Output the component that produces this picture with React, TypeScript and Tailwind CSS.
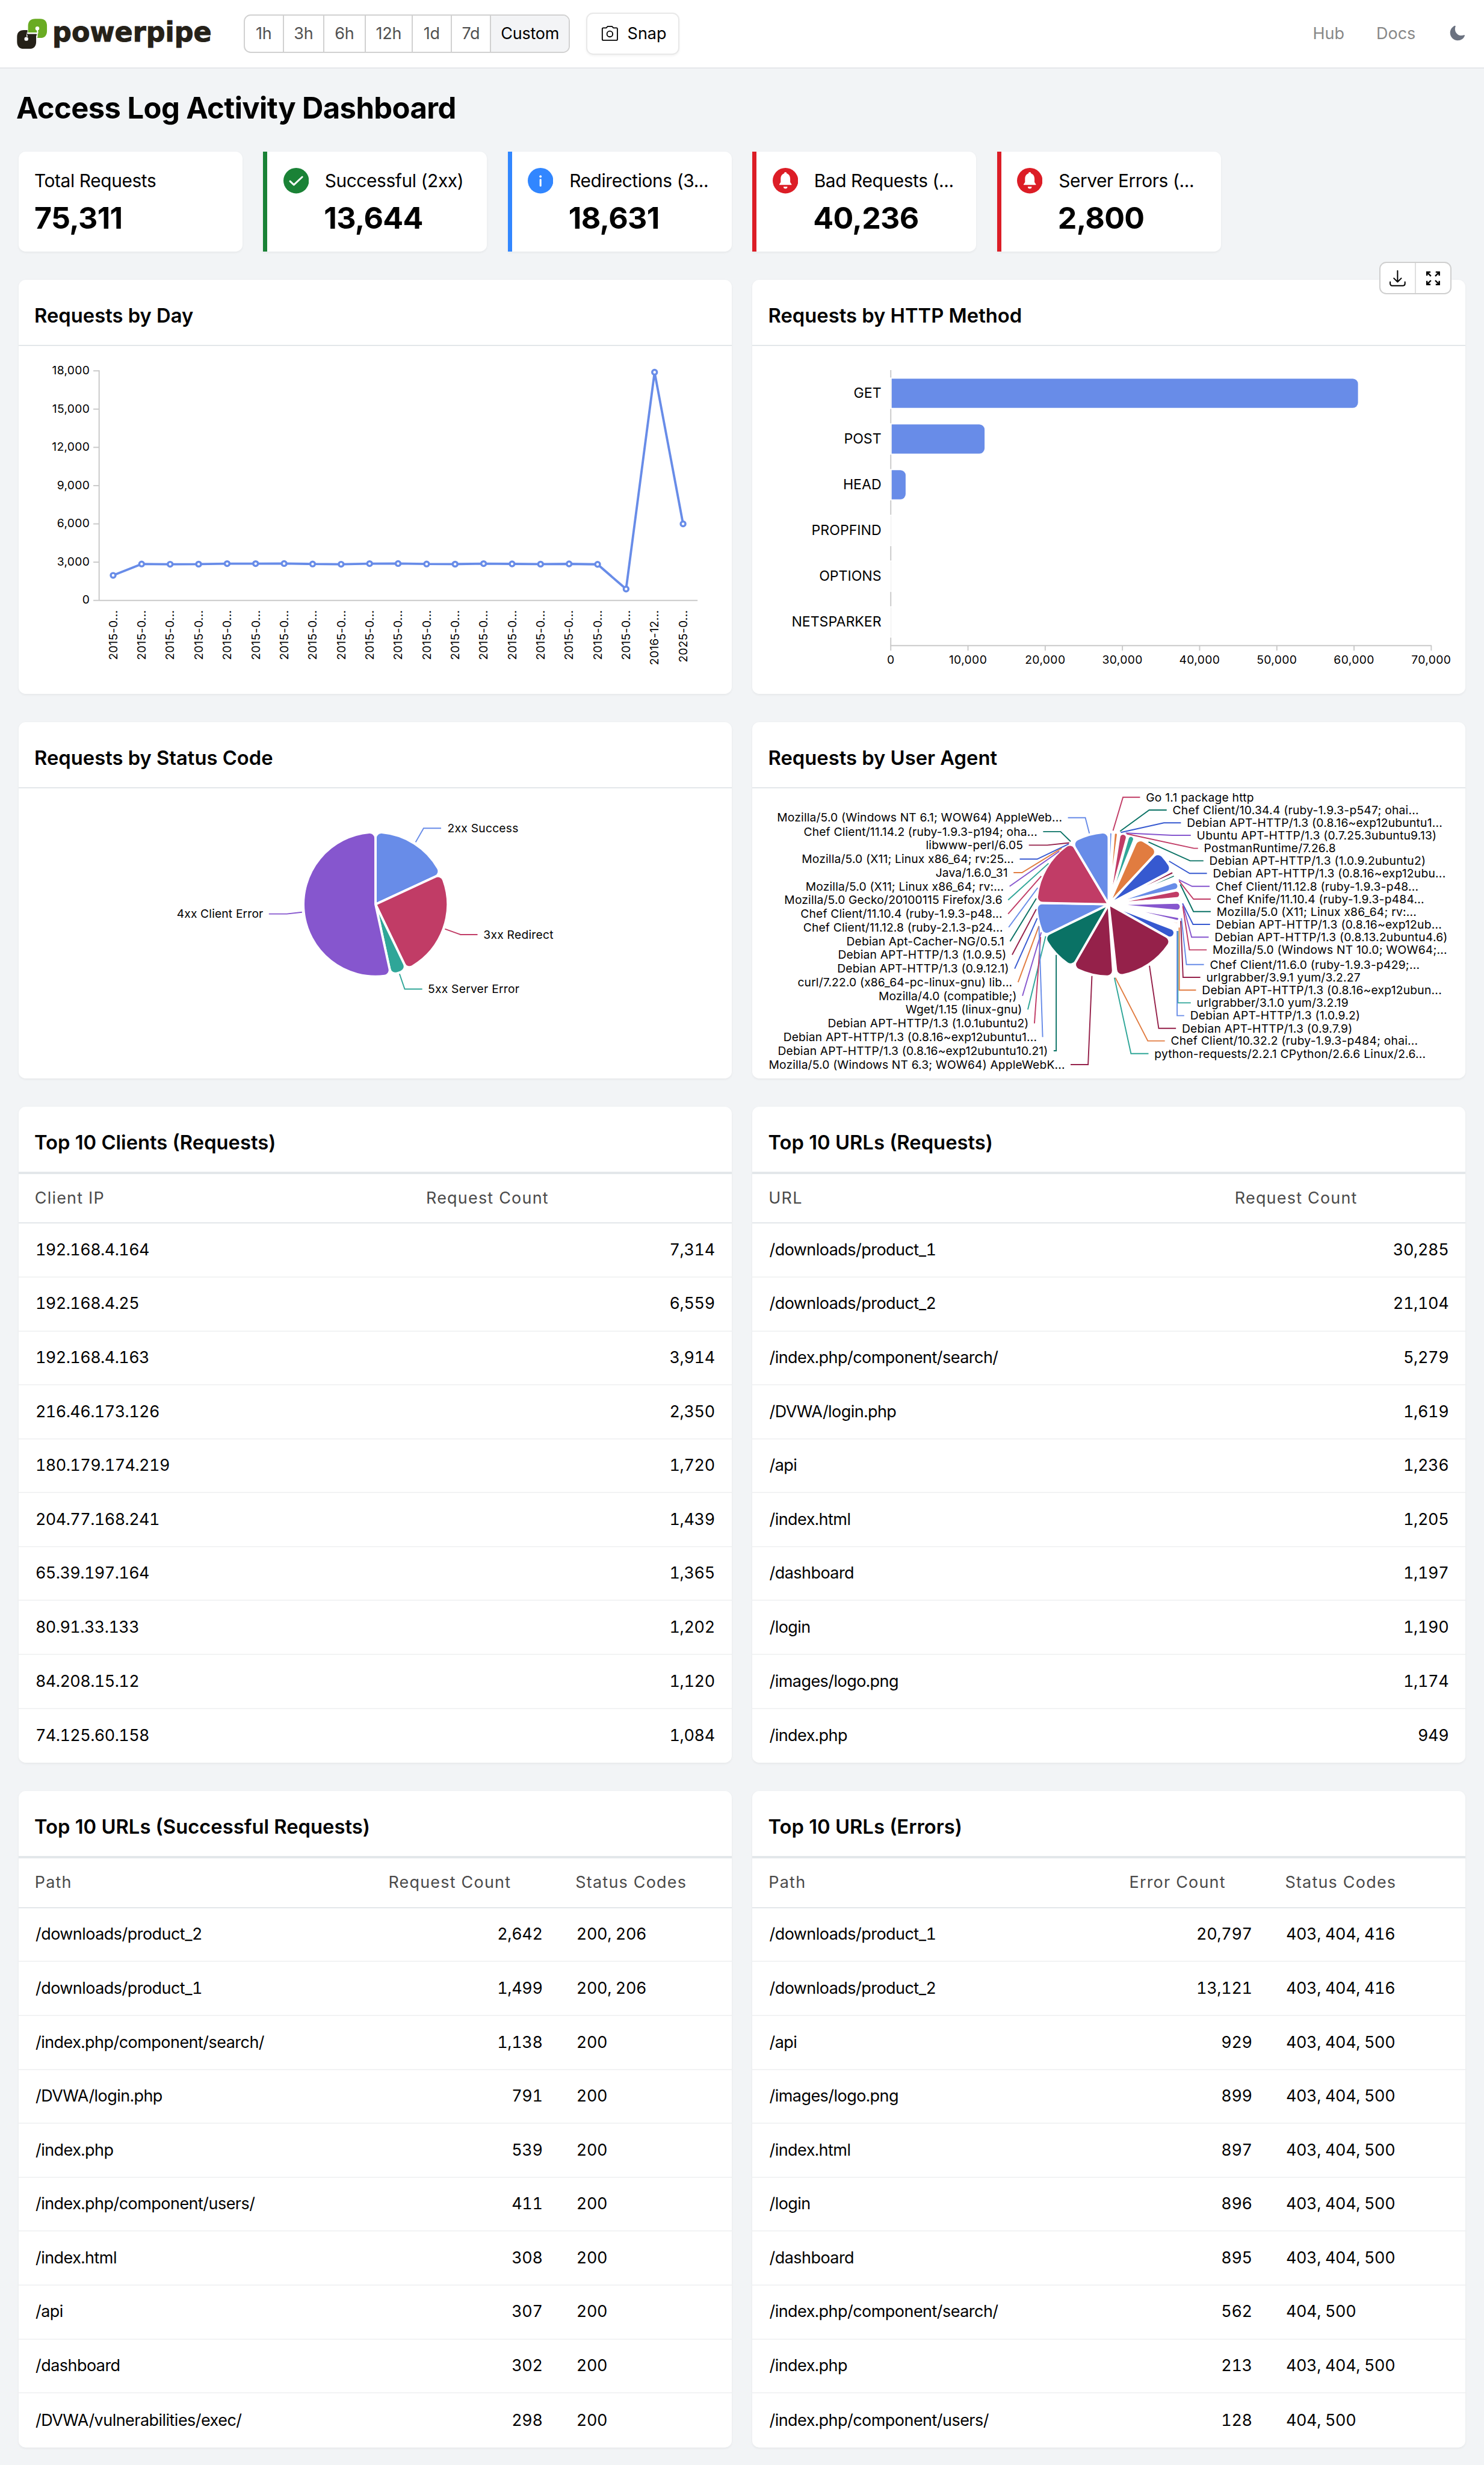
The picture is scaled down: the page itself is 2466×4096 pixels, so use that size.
import React from "react";

const C = {
  sky: "#688ce8",
  rose: "#c13c66",
  teal: "#2fa698",
  violet: "#8656ce",
  blue: "#3659d0",
  orange: "#e17c40",
  maroon: "#95214a",
  pine: "#0a7265",
};

/* ---------- geometry helpers ---------- */

function sector(cx: number, cy: number, R: number, a0: number, a1: number, corner = 5) {
  const rad = (d: number) => (d * Math.PI) / 180;
  const at = (r: number, a: number) =>
    (cx + r * Math.sin(a)).toFixed(2) + " " + (cy - r * Math.cos(a)).toFixed(2);
  const s = rad(a0);
  const e = rad(a1);
  const sn = Math.sin(Math.min((e - s) / 2, Math.PI / 2));
  const c = Math.min(corner, ((R * sn) / (1 + sn)) * 0.98);
  const off = Math.asin(c / (R - c));
  const side = Math.sqrt((R - c) ** 2 - c ** 2);
  const large = e - s - 2 * off > Math.PI ? 1 : 0;
  return [
    `M${cx} ${cy}`,
    `L${at(side, s)}`,
    `A${c} ${c} 0 0 1 ${at(R, s + off)}`,
    `A${R} ${R} 0 ${large} 1 ${at(R, e - off)}`,
    `A${c} ${c} 0 0 1 ${at(side, e)}`,
    "Z",
  ].join(" ");
}

/* ---------- header ---------- */

function Logo() {
  return (
    <svg className="h-[46px] w-[176px] shrink-0" viewBox="14 6 176 46">
      <g transform="translate(10 8) scale(0.16667)">
        <path d="M85 119V86Q85 48 123 48H147Q183 48 183 86V110Q183 147 147 147H133V119Z" fill="#69ab22" />
        <path d="M28 142Q28 106 64 106H82V127H127V166Q127 203 91 203H64Q28 203 28 166Z" fill="#252118" />
        <path d="M78 122H135V112L131 106" stroke="#fff" strokeWidth="5" fill="none" />
        <path d="M80 127V140" stroke="#fff" strokeWidth="6" />
        <path d="M133 97V143" stroke="#fff" strokeWidth="3.5" />
        <circle cx="133" cy="98" r="10" fill="#fff" />
        <circle cx="76" cy="152" r="10" fill="#fff" />
        <rect x="80" y="127" width="50" height="7" fill="#252118" />
      </g>
      <text
        x="45.2"
        y="35.6"
        fontSize="23.6"
        fontWeight="700"
        fontFamily="'DejaVu Sans', sans-serif"
        fill="#252118"
        stroke="#252118"
        strokeWidth="0.5"
        textLength="137.4"
        lengthAdjust="spacingAndGlyphs"
      >
        powerpipe
      </text>
    </svg>
  );
}

function CameraIcon() {
  return (
    <svg className="h-[17px] w-[17px]" viewBox="0 0 24 24" fill="none" stroke="black" strokeWidth="1.35" strokeLinejoin="round">
      <path d="M4 5.4h3.6L9.4 3.6h5.2l1.8 1.8H20a1.2 1.2 0 0 1 1.2 1.2v12.6a1.2 1.2 0 0 1-1.2 1.2H4a1.2 1.2 0 0 1-1.2-1.2V6.6a1.2 1.2 0 0 1 1.2-1.2Z" />
      <circle cx="12" cy="12.8" r="3.5" />
    </svg>
  );
}

function MoonIcon() {
  return (
    <svg className="h-[15px] w-[15px]" viewBox="0 0 24 24" fill="#6b7280">
      <path d="M9.528 1.718a.75.75 0 0 1 .162.819A8.97 8.97 0 0 0 9 6a9 9 0 0 0 9 9 8.97 8.97 0 0 0 3.463-.69.75.75 0 0 1 .981.98 10.503 10.503 0 0 1-9.694 6.46c-5.799 0-10.5-4.7-10.5-10.5 0-4.368 2.667-8.112 6.46-9.694a.75.75 0 0 1 .818.162Z" />
    </svg>
  );
}

const ranges: [string, string][] = [
  ["1h", "w-[32.7px]"],
  ["3h", "w-[35px]"],
  ["6h", "w-[35.5px]"],
  ["12h", "w-[40.8px]"],
  ["1d", "w-[33.5px]"],
  ["7d", "w-[34px]"],
  ["Custom", "w-[68px] bg-[#f3f4f6] text-black"],
];

function Header() {
  return (
    <header className="flex h-[59px] items-center border-b-[1.04px] border-[#e5e7eb] bg-white pl-[14px] pr-[15.5px]">
      <Logo />
      <div className="ml-[20.1px] flex h-[33.4px] overflow-hidden rounded-md border-[1.04px] border-[#d1d1d1] text-sm text-[#515151]">
        {ranges.map(([label, cls], i) => (
          <div
            key={label}
            className={
              "flex items-center justify-center tracking-[-0.1px] " +
              (i > 0 ? "border-l-[1.04px] border-[#d1d1d1] " : "") +
              cls
            }
          >
            {label}
          </div>
        ))}
      </div>
      <div className="ml-[14px] flex h-[36.5px] w-[80.5px] items-center rounded-md border-[1.04px] border-[#e8e8e8] pl-[11px] text-sm shadow-xs">
        <CameraIcon />
        <span className="ml-[6.5px]">Snap</span>
      </div>
      <nav className="ml-auto flex items-center text-sm text-[#888]">
        <span>Hub</span>
        <span className="ml-[27.5px]">Docs</span>
        <span className="ml-[28.5px]">
          <MoonIcon />
        </span>
      </nav>
    </header>
  );
}

/* ---------- summary cards ---------- */

function StatusIcon({ kind }: { kind: "ok" | "info" | "alert" }) {
  const fill = kind === "ok" ? "#1a8236" : kind === "info" ? "#3186ff" : "#dc1d26";
  return (
    <svg className="h-[22px] w-[22px] shrink-0" viewBox="-11 -11 22 22">
      <circle r="11" fill={fill} />
      {kind === "ok" && (
        <path d="M-5.3 0.5L-2 3.6L5.2 -3.2" fill="none" stroke="#fff" strokeWidth="1.5" strokeLinecap="round" strokeLinejoin="round" />
      )}
      {kind === "info" && (
        <g fill="#fff">
          <circle cy="-3.6" r="1" />
          <rect x="-0.8" y="-1.5" width="1.6" height="6.6" rx="0.7" />
        </g>
      )}
      {kind === "alert" && (
        <g fill="#fff">
          <path d="M0-7.4a1.1 1.1 0 0 1 1.1 1.2C3.3-5.5 4.1-3.7 4.1-1.6V1.3L5.3 3.1V3.7H-5.3V3.1L-4.1 1.3V-1.6C-4.1-3.7-3.3-5.5-1.1-6.2A1.1 1.1 0 0 1 0-7.4Z" />
          <path d="M-1.7 5.2H1.7A1.7 1.7 0 0 1-1.7 5.2Z" />
        </g>
      )}
    </svg>
  );
}

type Card = { label: string; value: string; kind?: "ok" | "info" | "alert"; bar?: string };

const cards: Card[] = [
  { label: "Total Requests", value: "75,311" },
  { label: "Successful (2xx)", value: "13,644", kind: "ok", bar: "rounded-l-none border-l-4 border-[#1a8236]" },
  { label: "Redirections (3...", value: "18,631", kind: "info", bar: "rounded-l-none border-l-4 border-[#3186ff]" },
  { label: "Bad Requests (...", value: "40,236", kind: "alert", bar: "rounded-l-none border-l-4 border-[#dc1d26]" },
  { label: "Server Errors (...", value: "2,800", kind: "alert", bar: "rounded-l-none border-l-4 border-[#dc1d26]" },
];

function SummaryCard({ label, value, kind, bar }: Card) {
  return (
    <div className={"h-[86px] rounded-md bg-white pt-[13px] shadow-xs " + (kind ? "pl-[13.6px] " + bar : "pl-[13.6px]")}>
      <div className="flex h-6 items-center">
        {kind && <StatusIcon kind={kind} />}
        <span className={"whitespace-nowrap text-[15.5px] tracking-[-0.2px] " + (kind ? "ml-[13.9px]" : "")}>{label}</span>
      </div>
      <div className={"mt-[4px] h-8 text-[26px] leading-8 font-bold tracking-[-0.35px] " + (kind ? "ml-[35.2px]" : "")}>
        {value}
      </div>
    </div>
  );
}

/* ---------- panels ---------- */

function Panel({ title, children, tools }: { title: string; children: React.ReactNode; tools?: React.ReactNode }) {
  return (
    <section className="relative rounded-md bg-white shadow-xs">
      <h2 className="flex h-[57px] items-center border-b-[1.04px] border-[#e3e7ea] pl-[13.6px] pt-[5.6px] text-[17px] font-semibold">
        {title}
      </h2>
      {tools}
      {children}
    </section>
  );
}

function PanelTools() {
  return (
    <div className="absolute top-[-15.5px] right-[12.2px] flex h-7 w-[62px] rounded-md border-[1.04px] border-[#cfcfcf] bg-white">
      <div className="flex flex-1 items-center justify-center">
        <svg className="h-[17px] w-[17px]" viewBox="0 0 24 24" fill="none" stroke="black" strokeWidth="1.5" strokeLinecap="round" strokeLinejoin="round">
          <path d="M3 16.5v2.25A2.25 2.25 0 0 0 5.25 21h13.5A2.25 2.25 0 0 0 21 18.75V16.5M16.5 12 12 16.5m0 0L7.5 12m4.5 4.5V3" />
        </svg>
      </div>
      <div className="flex flex-1 items-center justify-center border-l-[1.04px] border-[#dfdfdf]">
        <svg className="h-[16px] w-[16px]" viewBox="0 0 24 24" fill="none" stroke="black" strokeWidth="1.9">
          <path d="M4 8.6V4h4.6M4 4l5.2 5.2M15.4 4H20v4.6M20 4l-5.2 5.2M4 15.4V20h4.6M4 20l5.2-5.2M20 15.4V20h-4.6M20 20l-5.2-5.2" />
        </svg>
      </div>
    </div>
  );
}

/* ---------- charts ---------- */

const dayY = [496.3, 486.5, 486.7, 486.6, 486.2, 486.2, 486.1, 486.5, 486.7, 486.2, 486.1, 486.5, 486.6, 486.2, 486.4, 486.6, 486.4, 486.8, 508.1, 321.1, 451.9];
const dayX = (i: number) => 85.2 + 24.58 * (i + 0.5);

function DayChart() {
  const labels = dayY.map((_, i) => (i === 19 ? "2016-12..." : i === 20 ? "2025-0..." : "2015-0..."));
  return (
    <svg className="block h-[300px] w-[615px]" viewBox="16 298.5 615 300" fontSize="10" letterSpacing="0.15">
      <g stroke="#c9c9c9" strokeWidth="1" fill="none">
        <path d="M85.4 319.4V517.9M85.4 517.9H601.6" />
        {[0, 1, 2, 3, 4, 5, 6].map((i) => (
          <path key={i} d={`M80.4 ${517.9 - 33 * i}H85.4`} />
        ))}
      </g>
      {["0", "3,000", "6,000", "9,000", "12,000", "15,000", "18,000"].map((t, i) => (
        <text key={t} x="77.3" y={520.9 - 33 * i} textAnchor="end">
          {t}
        </text>
      ))}
      <polyline points={dayY.map((y, i) => `${dayX(i)},${y}`).join(" ")} fill="none" stroke={C.sky} strokeWidth="2" strokeLinejoin="bevel" />
      {dayY.map((y, i) => (
        <circle key={i} cx={dayX(i)} cy={y} r="2.05" fill="#fff" stroke={C.sky} strokeWidth="1.8" />
      ))}
      {labels.map((t, i) => (
        <text key={i} transform={`translate(${dayX(i) + 3.5} 526.2) rotate(-90)`} textAnchor="end">
          {t}
        </text>
      ))}
    </svg>
  );
}

const methods: [string, number][] = [
  ["GET", 1171.5],
  ["POST", 849.4],
  ["HEAD", 781.3],
  ["PROPFIND", 0],
  ["OPTIONS", 0],
  ["NETSPARKER", 0],
];

function MethodChart() {
  const x0 = 769.3;
  return (
    <svg className="block h-[300px] w-[615px]" viewBox="649 298.5 615 300">
      <path d="M768.5 319.3V556.9" stroke="#c9c9c9" strokeWidth="1" />
      {methods.map(([name, x], i) => {
        const top = 326.6 + 39.45 * i;
        const h = 25.2;
        return (
          <g key={name}>
            <rect x="767.6" y={top - 0.9} width="1.9" height={h + 1.8} fill="#fff" />
            <path d={`M768.7 ${top}v${h}`} stroke="#ececec" strokeWidth="0.5" />
            {x > 0 && (
              <path
                d={`M${x0} ${top}H${x - 4.5}a4.5 4.5 0 0 1 4.5 4.5v${h - 9}a4.5 4.5 0 0 1 -4.5 4.5H${x0}Z`}
                fill={C.sky}
              />
            )}
            <text x="760.4" y={343 + 39.45 * i} textAnchor="end" fontSize="12">
              {name}
            </text>
          </g>
        );
      })}
      <path d="M768 556.9H1235" stroke="#c9c9c9" strokeWidth="1" />
      {["0", "10,000", "20,000", "30,000", "40,000", "50,000", "60,000", "70,000"].map((t, i) => (
        <g key={t}>
          <path d={`M${768.5 + 66.6 * i} 557V561.2`} stroke="#c9c9c9" strokeWidth="1" />
          <text x={768.5 + 66.6 * i} y="572.8" textAnchor="middle" fontSize="10" letterSpacing="0.2">
            {t}
          </text>
        </g>
      ))}
    </svg>
  );
}

type Label = { text: string; color: string; line: string; x: number; y: number };

function Callouts({ items, anchor }: { items: Label[]; anchor: "start" | "end" }) {
  return (
    <>
      {items.map((l, i) => (
        <g key={i}>
          <polyline points={l.line} fill="none" stroke={l.color} strokeWidth="1" />
          <text x={l.x} y={l.y + 3.5} textAnchor={anchor} fontSize="10" letterSpacing={anchor === "end" ? "0.08" : "0.12"}>
            {l.text}
          </text>
        </g>
      ))}
    </>
  );
}

const statusSlices: [number, number, string][] = [
  [0, 65.2, C.sky],
  [65.2, 154.3, C.rose],
  [154.3, 167.7, C.teal],
  [167.7, 360, C.violet],
];

function StatusChart() {
  return (
    <svg className="block h-[250px] w-[615px]" viewBox="16 680 615 250">
      {statusSlices.map(([a, b, color]) => (
        <path key={a} d={sector(323.8, 780, 62.3, a, b)} fill={color} stroke="#fff" strokeWidth="2" />
      ))}
      <Callouts
        anchor="start"
        items={[
          { text: "2xx Success", color: C.sky, line: "358.4,726.4 365.3,714.4 380.4,714.4", x: 385.9, y: 714.6 },
          { text: "3xx Redirect", color: C.rose, line: "383.7,801.3 397.1,806.1 411.8,806.1", x: 416.9, y: 806.1 },
          { text: "5xx Server Error", color: C.teal, line: "344.5,840 349,853.1 364.1,853.1", x: 369, y: 853.1 },
        ]}
      />
      <Callouts
        anchor="end"
        items={[{ text: "4xx Client Error", color: C.violet, line: "260.4,786.8 247.3,788.3 231.8,788.3", x: 227, y: 788.1 }]}
      />
    </svg>
  );
}

const agentSlices: [number, number, string][] = [
  [0.3, 3.1, C.sky],
  [4.1, 7.6, C.orange],
  [8.8, 15.4, C.rose],
  [16, 21.6, C.teal],
  [23.6, 42.9, C.orange],
  [42.9, 61.9, C.blue],
  [62.1, 65.3, C.maroon],
  [65.3, 67.9, C.pine],
  [71.1, 78, C.sky],
  [78.4, 85, C.rose],
  [85.3, 87.3, C.teal],
  [88.6, 95.5, C.violet],
  [100.2, 103.8, C.violet],
  [104.3, 106.3, C.orange],
  [111, 119.2, C.blue],
  [119.2, 173.7, C.maroon],
  [176.2, 210, C.maroon],
  [210, 243.9, C.pine],
  [243.9, 271.1, C.sky],
  [271.1, 329.2, C.rose],
  [329.2, 360, C.sky],
];

type AgentRow = [string, string, number, number, number, number, number];

const rightAgents: AgentRow[] = [
  ["Go 1.1 package http", C.rose, 960.2, 716.5, 968.8, 687.7, 983.5],
  ["Chef Client/10.34.4 (ruby-1.9.3-p547; ohai...", C.pine, 966.3, 717, 991.4, 698.7, 1006.5],
  ["Debian APT-HTTP/1.3 (0.8.16~exp12ubuntu1...", C.blue, 966.9, 718, 1004.1, 709.7, 1018.8],
  ["Ubuntu APT-HTTP/1.3 (0.7.25.3ubuntu9.13)", C.violet, 971.2, 718.5, 1011.2, 720.5, 1027.3],
  ["PostmanRuntime/7.26.8", C.rose, 972, 719.2, 1030, 731.7, 1033.5],
  ["Debian APT-HTTP/1.3 (1.0.9.2ubuntu2)", C.pine, 990.8, 726.3, 1026.7, 742.5, 1038.2],
  ["Debian APT-HTTP/1.3 (0.8.16~exp12ubu...", C.blue, 1008.6, 742.8, 1026.3, 753.3, 1041.2],
  ["Chef Client/11.12.8 (ruby-1.9.3-p48...", C.violet, 1016.9, 758.8, 1028.4, 764.5, 1043.5],
  ["Chef Knife/11.10.4 (ruby-1.9.3-p484...", C.rose, 1017.3, 760, 1029.6, 775.5, 1044.5],
  ["Mozilla/5.0 (X11; Linux x86_64; rv:...", C.pine, 1018.2, 762.8, 1029.6, 786.3, 1044.5],
  ["Debian APT-HTTP/1.3 (0.8.16~exp12ub...", C.blue, 1020.2, 779.2, 1029.2, 797.3, 1043.9],
  ["Debian APT-HTTP/1.3 (0.8.13.2ubuntu4.6)", C.violet, 1020.4, 780, 1028, 808.3, 1042.7],
  ["Mozilla/5.0 (Windows NT 10.0; WOW64;...", C.rose, 1020.4, 781.7, 1026.1, 819.3, 1041],
  ["Chef Client/11.6.0 (ruby-1.9.3-p429;...", C.sky, 1019.2, 792, 1023.5, 832, 1038.6],
  ["urlgrabber/3.9.1 yum/3.2.27", C.maroon, 1018.6, 794.3, 1020.6, 843, 1035.5],
  ["Debian APT-HTTP/1.3 (0.8.16~exp12ubun...", C.orange, 1017.3, 800, 1017.3, 854, 1031.8],
  ["urlgrabber/3.1.0 yum/3.2.19", C.teal, 1016.1, 803, 1016.1, 865, 1027.3],
  ["Debian APT-HTTP/1.3 (1.0.9.2)", C.sky, 1015.5, 803, 1015.5, 876, 1021.6],
  ["Debian APT-HTTP/1.3 (0.9.7.9)", C.maroon, 991.6, 833, 999.6, 887, 1014.5],
  ["Chef Client/10.32.2 (ruby-1.9.3-p484; ohai...", C.orange, 962.2, 843.3, 990.2, 897.8, 1004.9],
  ["python-requests/2.2.1 CPython/2.6.6 Linux/2.6...", C.teal, 961.4, 843.3, 975.7, 908.8, 990.8],
];

const leftAgents: AgentRow[] = [
  ["Mozilla/5.0 (Windows NT 6.1; WOW64) AppleWeb...", C.sky, 939.8, 718.8, 936.3, 705.3, 921.3],
  ["Chef Client/11.14.2 (ruby-1.9.3-p194; oha...", C.pine, 923.6, 725.8, 914.9, 717.3, 899.9],
  ["libwww-perl/6.05", C.maroon, 922.4, 727, 903.5, 729, 887.6],
  ["Mozilla/5.0 (X11; Linux x86_64; rv:25...", C.blue, 922, 728, 894.8, 741, 879.7],
  ["Java/1.6.0_31", C.orange, 915.9, 731.7, 881.7, 752.7, 874.4],
  ["Mozilla/5.0 (X11; Linux x86_64; rv:...", C.violet, 913.9, 734.2, 871, 764.5, 871],
  ["Mozilla/5.0 Gecko/20100115 Firefox/3.6", C.teal, 904.6, 744.7, 869.7, 776.3, 869.7],
  ["Chef Client/11.10.4 (ruby-1.9.3-p48...", C.rose, 898.3, 755.7, 869.7, 788.3, 869.7],
  ["Chef Client/11.12.8 (ruby-2.1.3-p24...", C.sky, 895.2, 765.8, 870.2, 799.8, 870.2],
  ["Debian Apt-Cacher-NG/0.5.1", C.pine, 894, 775, 871.4, 812, 871.4],
  ["Debian APT-HTTP/1.3 (1.0.9.5)", C.maroon, 894, 784.2, 873.2, 823.5, 873.2],
  ["Debian APT-HTTP/1.3 (0.9.12.1)", C.blue, 894.8, 792, 875.4, 835.5, 875.4],
  ["curl/7.22.0 (x86_64-pc-linux-gnu) lib...", C.orange, 896.3, 798.7, 878.3, 847.2, 878.3],
  ["Mozilla/4.0 (compatible;)", C.violet, 898.3, 804.2, 882.1, 859, 882.1],
  ["Wget/1.15 (linux-gnu)", C.teal, 902.1, 807.5, 886.7, 870.8, 886.7],
  ["Debian APT-HTTP/1.3 (1.0.1ubuntu2)", C.rose, 897.7, 808.3, 892.4, 882.7, 892.4],
  ["Debian APT-HTTP/1.3 (0.8.16~exp12ubuntu1...", C.sky, 896.3, 799, 899.5, 894.5, 899.5],
  ["Debian APT-HTTP/1.3 (0.8.16~exp12ubuntu10.21)", C.pine, 911.2, 823.7, 911.2, 906.3, 909],
  ["Mozilla/5.0 (Windows NT 6.3; WOW64) AppleWebK...", C.maroon, 942, 841.8, 938.7, 918.3, 923.6],
];

function AgentChart() {
  const toLabels = (rows: AgentRow[], dx: number): Label[] =>
    rows.map(([text, color, sx, sy, ex, y, end]) => ({
      text,
      color,
      line: `${sx},${sy} ${ex},${y} ${end},${y}`,
      x: end + dx,
      y,
    }));
  return (
    <svg className="block h-[250px] w-[615px]" viewBox="649 680 615 250">
      {agentSlices.map(([a, b, color]) => (
        <path key={a} d={sector(956.5, 780, 62.3, a, b)} fill={color} stroke="#fff" strokeWidth="2" />
      ))}
      <Callouts anchor="start" items={toLabels(rightAgents, 5.1)} />
      <Callouts anchor="end" items={toLabels(leftAgents, -4.9)} />
    </svg>
  );
}

/* ---------- tables ---------- */

type TableProps = { head: string[]; cols: string; rows: string[][] };

function Table({ head, cols, rows }: TableProps) {
  return (
    <div>
      <div className={"grid h-[44px] items-center border-y-[1.04px] border-[#e3e7ea] text-sm tracking-[0.63px] text-[#4a4a4a] " + cols}>
        {head.map((h) => (
          <div key={h} className="px-[14px]">
            {h}
          </div>
        ))}
      </div>
      {rows.map((r, i) => (
        <div key={i} className={"grid h-[46.5px] items-center text-sm tabular-nums " + cols + (i < rows.length - 1 ? " border-b-[1.04px] border-[#f2f3f4]" : "")}>
          <div className={r[0].startsWith("/") ? "pl-[14.6px] tracking-[-0.27px]" : "pl-[14.6px] tracking-[-0.3px]"}>{r[0]}</div>
          <div className="pr-[14.4px] text-right tracking-[-0.18px]">{r[1]}</div>
          {r[2] && <div className="pl-[14.8px] tracking-[-0.2px]">{r[2]}</div>}
        </div>
      ))}
    </div>
  );
}

const clients = [
  ["192.168.4.164", "7,314"],
  ["192.168.4.25", "6,559"],
  ["192.168.4.163", "3,914"],
  ["216.46.173.126", "2,350"],
  ["180.179.174.219", "1,720"],
  ["204.77.168.241", "1,439"],
  ["65.39.197.164", "1,365"],
  ["80.91.33.133", "1,202"],
  ["84.208.15.12", "1,120"],
  ["74.125.60.158", "1,084"],
];

const urls = [
  ["/downloads/product_1", "30,285"],
  ["/downloads/product_2", "21,104"],
  ["/index.php/component/search/", "5,279"],
  ["/DVWA/login.php", "1,619"],
  ["/api", "1,236"],
  ["/index.html", "1,205"],
  ["/dashboard", "1,197"],
  ["/login", "1,190"],
  ["/images/logo.png", "1,174"],
  ["/index.php", "949"],
];

const successes = [
  ["/downloads/product_2", "2,642", "200, 206"],
  ["/downloads/product_1", "1,499", "200, 206"],
  ["/index.php/component/search/", "1,138", "200"],
  ["/DVWA/login.php", "791", "200"],
  ["/index.php", "539", "200"],
  ["/index.php/component/users/", "411", "200"],
  ["/index.html", "308", "200"],
  ["/api", "307", "200"],
  ["/dashboard", "302", "200"],
  ["/DVWA/vulnerabilities/exec/", "298", "200"],
];

const errors = [
  ["/downloads/product_1", "20,797", "403, 404, 416"],
  ["/downloads/product_2", "13,121", "403, 404, 416"],
  ["/api", "929", "403, 404, 500"],
  ["/images/logo.png", "899", "403, 404, 500"],
  ["/index.html", "897", "403, 404, 500"],
  ["/login", "896", "403, 404, 500"],
  ["/dashboard", "895", "403, 404, 500"],
  ["/index.php/component/search/", "562", "404, 500"],
  ["/index.php", "213", "403, 404, 500"],
  ["/index.php/component/users/", "128", "404, 500"],
];

export default function App() {
  return (
    <div className="h-[2126px] w-[1280px] overflow-hidden bg-[#f2f4f6] font-['Inter',sans-serif] text-black [zoom:1.92656]">
      <Header />
      <main className="pl-[14px] pr-4">
        <h1 className="mt-[18.4px] h-8 text-[25.4px] leading-8 font-bold tracking-[-0.3px]">Access Log Activity Dashboard</h1>
        <div className="mt-[21.6px] ml-[2px] grid grid-cols-6 gap-[18px]">
          {cards.map((c) => (
            <SummaryCard key={c.label} {...c} />
          ))}
        </div>
        <div className="mt-[24.5px] ml-[2px] grid grid-cols-2 gap-x-[18px] gap-y-[24.5px]">
          <Panel title="Requests by Day">
            <DayChart />
          </Panel>
          <Panel title="Requests by HTTP Method" tools={<PanelTools />}>
            <MethodChart />
          </Panel>
          <Panel title="Requests by Status Code">
            <StatusChart />
          </Panel>
          <Panel title="Requests by User Agent">
            <AgentChart />
          </Panel>
          <Panel title="Top 10 Clients (Requests)">
            <Table head={["Client IP", "Request Count"]} cols="grid-cols-[337.5px_277.5px]" rows={clients} />
          </Panel>
          <Panel title="Top 10 URLs (Requests)">
            <Table head={["URL", "Request Count"]} cols="grid-cols-[402px_213px]" rows={urls} />
          </Panel>
          <Panel title="Top 10 URLs (Successful Requests)">
            <Table head={["Path", "Request Count", "Status Codes"]} cols="grid-cols-[305px_161.4px_148.6px]" rows={successes} />
          </Panel>
          <Panel title="Top 10 URLs (Errors)">
            <Table head={["Path", "Error Count", "Status Codes"]} cols="grid-cols-[311px_134.4px_169.6px]" rows={errors} />
          </Panel>
        </div>
      </main>
    </div>
  );
}
